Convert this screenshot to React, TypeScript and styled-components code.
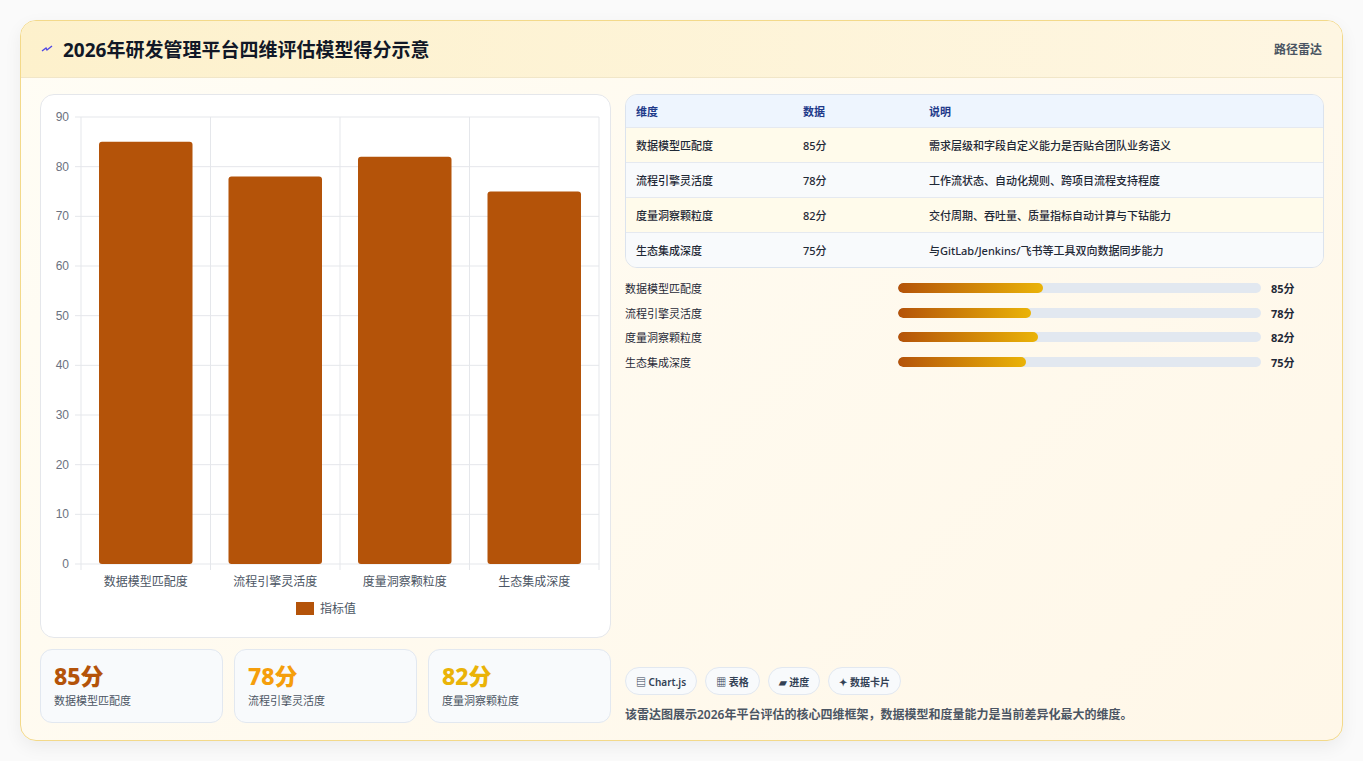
import React from "react";
import styled, { createGlobalStyle } from "styled-components";

const Global = createGlobalStyle`
  body { margin: 0; background: #f3f4f6; font-family: "Noto Sans", "Noto Sans CJK SC", sans-serif; }
`;

const data = [
  { name: "数据模型匹配度", v: 85, desc: "需求层级和字段自定义能力是否贴合团队业务语义" },
  { name: "流程引擎灵活度", v: 78, desc: "工作流状态、自动化规则、跨项目流程支持程度" },
  { name: "度量洞察颗粒度", v: 82, desc: "交付周期、吞吐量、质量指标自动计算与下钻能力" },
  { name: "生态集成深度", v: 75, desc: "与GitLab/Jenkins/飞书等工具双向数据同步能力" },
];

const Page = styled.div`
  padding: 20px;
  height: 761px;
  box-sizing: border-box;
  background: #fafafa;
`;
const Card = styled.div`
  height: 721px;
  box-sizing: border-box;
  border: 1px solid #f3d98a;
  border-radius: 16px;
  background: linear-gradient(135deg, #fffdf5, #fff7e8);
  box-shadow: 0 6px 18px rgba(0,0,0,0.06);
  overflow: hidden;
  display: flex;
  flex-direction: column;
`;
const Header = styled.div`
  height: 56px;
  flex: none;
  display: flex;
  align-items: center;
  justify-content: space-between;
  padding: 0 20px;
  background: linear-gradient(90deg, #fdf1cc, #fef6e2);
  border-bottom: 1px solid #f1e6c8;
`;
const Title = styled.h1`
  margin: 0;
  font-size: 19px;
  font-weight: 700;
  color: #111827;
  display: flex;
  align-items: center;
  gap: 10px;
`;
const Tag = styled.span`
  font-size: 12px;
  color: #4b5563;
  font-weight: 600;
`;
const Body = styled.div`
  flex: 1;
  display: grid;
  grid-template-columns: 571px 1fr;
  gap: 14px;
  padding: 16px 18px 18px 19px;
`;
const Col = styled.div`
  display: flex;
  flex-direction: column;
  gap: 11px;
  min-height: 0;
`;
const ChartBox = styled.div`
  height: 544px;
  background: #fff;
  border: 1px solid #e5e7eb;
  border-radius: 14px;
  box-sizing: border-box;
`;
const Stats = styled.div`
  display: grid;
  grid-template-columns: repeat(3, 1fr);
  gap: 11px;
`;
const Stat = styled.div`
  height: 74px;
  box-sizing: border-box;
  background: #f8fafc;
  border: 1px solid #e2e8f0;
  border-radius: 12px;
  padding: 10px 13px;
`;
const StatNum = styled.div<{ $c: string }>`
  font-size: 23px;
  font-weight: 800;
  color: ${(p) => p.$c};
  line-height: 32px;
`;
const StatLabel = styled.div`
  font-size: 11px;
  color: #4b5563;
`;
const Table = styled.div`
  border: 1px solid #dbe3ee;
  border-radius: 12px;
  overflow: hidden;
  font-size: 11px;
`;
const Row = styled.div<{ $bg: string; $head?: boolean }>`
  display: grid;
  grid-template-columns: 167px 126px 1fr;
  height: ${(p) => (p.$head ? 32 : 34)}px;
  align-items: center;
  padding: 0 10px;
  background: ${(p) => p.$bg};
  color: ${(p) => (p.$head ? "#1e3a8a" : "#1f2937")};
  font-weight: ${(p) => (p.$head ? 600 : 500)};
  border-top: ${(p) => (p.$head ? "none" : "1px solid #e5e9f0")};
`;
const Bars = styled.div`
  margin-top: 12px;
  display: flex;
  flex-direction: column;
  gap: 8px;
`;
const BarRow = styled.div`
  display: grid;
  grid-template-columns: 263px 363px auto;
  align-items: center;
  gap: 10px;
  font-size: 11px;
  color: #1f2937;
  height: 16.5px;
`;
const Track = styled.div`
  height: 10px;
  border-radius: 5px;
  background: #e2e8f0;
  overflow: hidden;
`;
const Fill = styled.div`
  height: 100%;
  border-radius: 5px;
  background: linear-gradient(90deg, #b45309, #eab308);
`;
const Val = styled.span`
  font-weight: 700;
`;
const Spacer = styled.div`flex: 1;`;
const Chips = styled.div`
  display: flex;
  gap: 8px;
`;
const Chip = styled.span`
  height: 28px;
  box-sizing: border-box;
  padding: 0 10px;
  display: inline-flex;
  align-items: center;
  border: 1px solid #e2e8f0;
  border-radius: 14px;
  background: #f8fafc;
  font-size: 10px;
  font-weight: 600;
  color: #334155;
`;
const Caption = styled.p`
  margin: 10px 0 0;
  font-size: 12px;
  font-weight: 600;
  color: #4b5563;
`;

function Chart() {
  const x0 = 40, x1 = 558, y0 = 22, y1 = 469;
  const h = y1 - y0;
  const cw = (x1 - x0) / 4;
  return (
    <svg width="569" height="542">
      {Array.from({ length: 10 }, (_, i) => {
        const y = y1 - (i * h) / 9;
        return (
          <g key={i}>
            <line x1={x0 - 6} x2={x1} y1={y} y2={y} stroke="#e5e7eb" />
            <text x={x0 - 12} y={y + 4} fontSize="12" textAnchor="end" fill="#6b7280" fontFamily="Liberation Sans, sans-serif">{i * 10}</text>
          </g>
        );
      })}
      {[0, 1, 2, 3, 4].map((i) => (
        <line key={i} x1={x0 + i * cw} x2={x0 + i * cw} y1={y0} y2={y1 + 6} stroke="#e5e7eb" />
      ))}
      {data.map((d, i) => {
        const bh = (d.v / 90) * h;
        return (
          <g key={d.name}>
            <rect x={x0 + i * cw + 18} y={y1 - bh} width={cw - 36} height={bh} rx="3" fill="#b45309" />
            <text x={x0 + i * cw + cw / 2} y={y1 + 22} fontSize="12" textAnchor="middle" fill="#4b5563">{d.name}</text>
          </g>
        );
      })}
      <rect x="255" y="507" width="18" height="13" fill="#b45309" />
      <text x="279" y="518" fontSize="12" fill="#4b5563">指标值</text>
    </svg>
  );
}

export default function App() {
  return (
    <Page>
      <Global />
      <Card>
        <Header>
          <Title>
            <svg width="12" height="12" viewBox="0 0 12 12"><path d="M1 8 L5 5 L6 7 L11 3" stroke="#4f46e5" strokeWidth="1.4" fill="none" /></svg>
            2026年研发管理平台四维评估模型得分示意
          </Title>
          <Tag>路径雷达</Tag>
        </Header>
        <Body>
          <Col>
            <ChartBox><Chart /></ChartBox>
            <Stats>
              <Stat><StatNum $c="#b45309">85分</StatNum><StatLabel>数据模型匹配度</StatLabel></Stat>
              <Stat><StatNum $c="#f59e0b">78分</StatNum><StatLabel>流程引擎灵活度</StatLabel></Stat>
              <Stat><StatNum $c="#eab308">82分</StatNum><StatLabel>度量洞察颗粒度</StatLabel></Stat>
            </Stats>
          </Col>
          <Col style={{ gap: 0 }}>
            <Table>
              <Row $head $bg="#eef5fe"><span>维度</span><span>数据</span><span>说明</span></Row>
              {data.map((d, i) => (
                <Row key={d.name} $bg={i % 2 ? "#f8fafc" : "#fffbeb"}>
                  <span>{d.name}</span><span>{d.v}分</span><span>{d.desc}</span>
                </Row>
              ))}
            </Table>
            <Bars>
              {data.map((d) => (
                <BarRow key={d.name}>
                  <span>{d.name}</span>
                  <Track><Fill style={{ width: `${d.v / 2.125}%` }} /></Track>
                  <Val>{d.v}分</Val>
                </BarRow>
              ))}
            </Bars>
            <Spacer />
            <Chips>
              <Chip>▤ Chart.js</Chip>
              <Chip>▦ 表格</Chip>
              <Chip>▰ 进度</Chip>
              <Chip>✦ 数据卡片</Chip>
            </Chips>
            <Caption>该雷达图展示2026年平台评估的核心四维框架，数据模型和度量能力是当前差异化最大的维度。</Caption>
          </Col>
        </Body>
      </Card>
    </Page>
  );
}
